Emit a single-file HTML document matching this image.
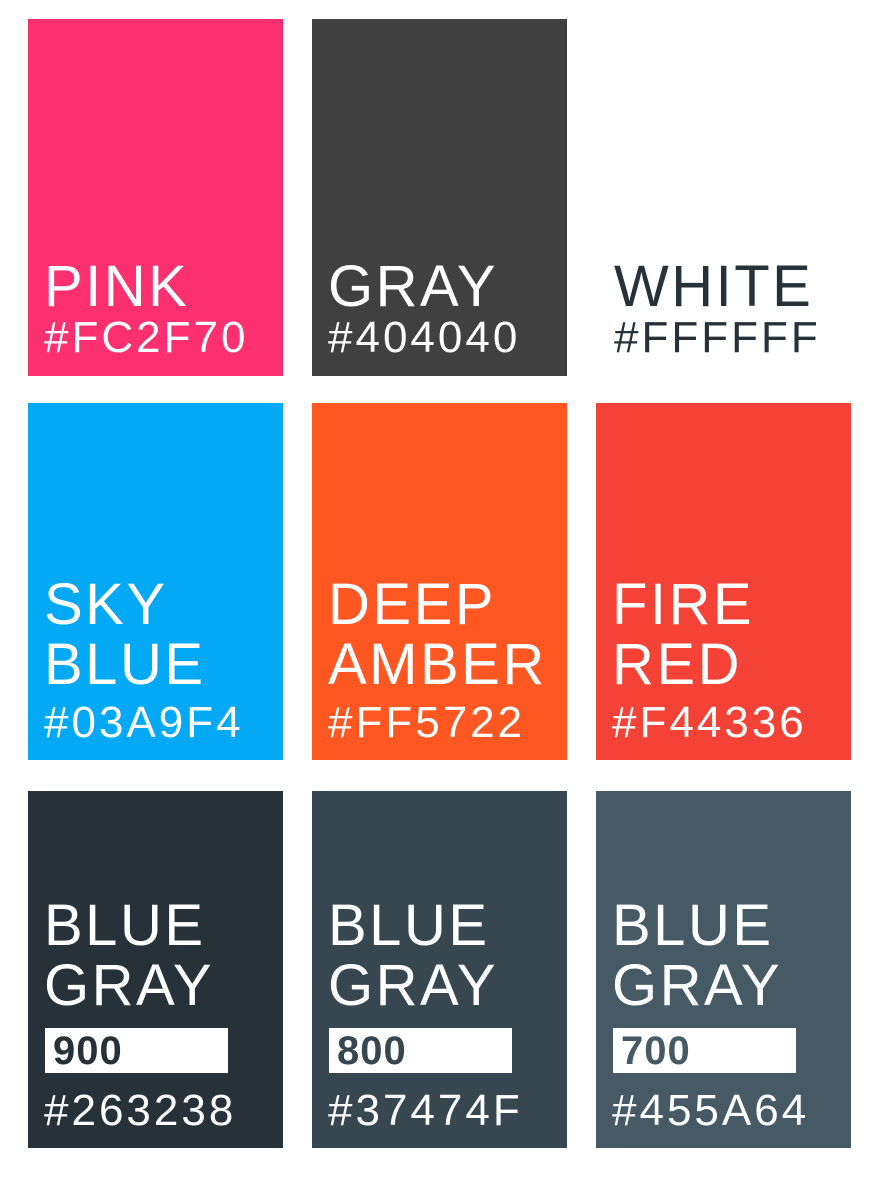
<!DOCTYPE html><html><head><style>
body{margin:0;width:880px;height:1178px;background:#fff;position:relative;font-family:"Liberation Sans",sans-serif;overflow:hidden}
.c{position:absolute;width:255px;height:357px}
.t{position:absolute;left:16px;font-size:58px;line-height:60px;color:#fff;letter-spacing:2.5px;white-space:nowrap}
.h{position:absolute;left:16px;font-size:44px;line-height:44px;color:#fff;letter-spacing:3px}
.b{position:absolute;left:17px;top:237px;width:183px;height:45px;background:#fff;font-weight:bold;font-size:40px;line-height:46px;padding-left:8px;box-sizing:border-box;letter-spacing:1px}
</style></head><body>
<div class="c" style="left:28px;top:19px;background:#FC2F70"><div class="t" style="top:238px">PINK</div><div class="h" style="top:297px">#FC2F70</div></div>
<div class="c" style="left:312px;top:19px;background:#404040"><div class="t" style="top:238px">GRAY</div><div class="h" style="top:297px">#404040</div></div>
<div class="c" style="left:596px;top:19px;background:#fff"><div class="t" style="top:238px;color:#263238;left:18px">WHITE</div><div class="h" style="top:297px;color:#263238;left:18px">#FFFFFF</div></div>
<div class="c" style="left:28px;top:403px;background:#03A9F4"><div class="t" style="top:172px">SKY<br>BLUE</div><div class="h" style="top:298px">#03A9F4</div></div>
<div class="c" style="left:312px;top:403px;background:#FF5722"><div class="t" style="top:172px">DEEP<br>AMBER</div><div class="h" style="top:298px">#FF5722</div></div>
<div class="c" style="left:596px;top:403px;background:#F44336"><div class="t" style="top:172px">FIRE<br>RED</div><div class="h" style="top:298px">#F44336</div></div>
<div class="c" style="left:28px;top:791px;background:#263238"><div class="t" style="top:105px">BLUE<br>GRAY</div><div class="b" style="color:#263238">900</div><div class="h" style="top:298px">#263238</div></div>
<div class="c" style="left:312px;top:791px;background:#37474F"><div class="t" style="top:105px">BLUE<br>GRAY</div><div class="b" style="color:#37474F">800</div><div class="h" style="top:298px">#37474F</div></div>
<div class="c" style="left:596px;top:791px;background:#455A64"><div class="t" style="top:105px">BLUE<br>GRAY</div><div class="b" style="color:#455A64">700</div><div class="h" style="top:298px">#455A64</div></div>
</body></html>
